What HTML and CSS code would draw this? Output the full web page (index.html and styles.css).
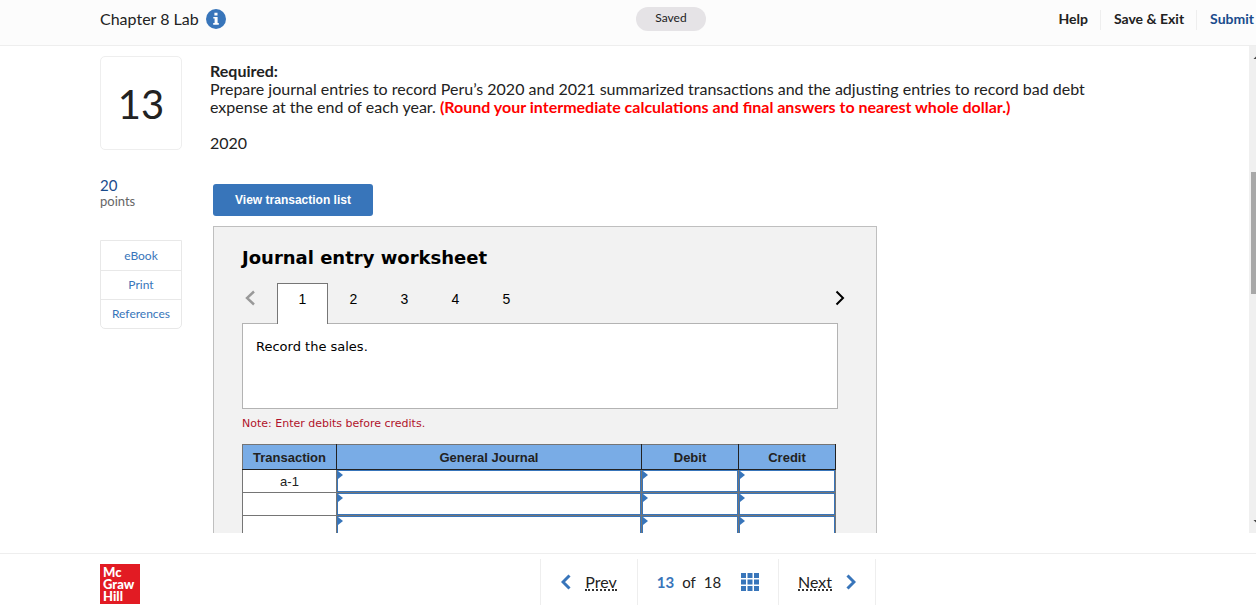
FILE: index.html
```html
<!DOCTYPE html>
<html lang="en">
<head>
<meta charset="utf-8">
<title>Chapter 8 Lab</title>
<link rel="stylesheet" href="styles.css">
</head>
<body>
<header class="topbar">
  <div class="title">
    <span>Chapter 8 Lab</span>
    <button class="icon-button" type="button" aria-label="Information">
      <svg width="20" height="20" viewBox="0 0 20 20"><circle cx="10" cy="10" r="10" fill="#3875ba"/><path fill="#fff" d="M8.4 3.8h3.1v2.6H8.4zM7.3 7.9h4.3v6.2h1.2v1.7H7.2v-1.7h1.4V9.6H7.3z"/></svg>
    </button>
  </div>
  <span class="saved">Saved</span>
  <nav class="actions">
    <a href="#">Help</a>
    <a href="#">Save &amp; Exit</a>
    <a href="#" class="submit">Submit</a>
  </nav>
</header>

<div class="viewport">
  <div class="scroll">
    <aside class="side">
      <div class="number">13</div>
      <div class="points"><span class="value">20</span><span>points</span></div>
      <nav class="resources">
        <a href="#">eBook</a>
        <a href="#">Print</a>
        <a href="#">References</a>
      </nav>
    </aside>
    <main class="content">
      <div class="question">
        <p><strong>Required:</strong></p>
        <p>Prepare journal entries to record Peru’s 2020 and 2021 summarized transactions and the adjusting entries to record bad debt<br>expense at the end of each year. <strong class="hint">(Round your intermediate calculations and final answers to nearest whole dollar.)</strong></p>
        <p class="year">2020</p>
      </div>
      <button class="view-list" type="button">View transaction list</button>
      <section class="worksheet">
        <h2>Journal entry worksheet</h2>
        <div class="tabs">
          <button class="arrow" type="button" aria-label="Previous entry">
            <svg width="16" height="16" viewBox="0 0 16 16" fill="none" stroke="#999" stroke-width="2.400"><path d="M12 1.500 5 8 12 14.500"/></svg>
          </button>
          <button class="tab active" type="button">1</button>
          <button class="tab" type="button">2</button>
          <button class="tab" type="button">3</button>
          <button class="tab" type="button">4</button>
          <button class="tab" type="button">5</button>
          <button class="arrow next" type="button" aria-label="Next entry">
            <svg width="16" height="16" viewBox="0 0 16 16" fill="none" stroke="#000" stroke-width="2"><path d="M4.500 1.500 11 8 4.500 14.500"/></svg>
          </button>
        </div>
        <div class="instruction">Record the sales.</div>
        <p class="note">Note: Enter debits before credits.</p>
        <table class="journal">
          <colgroup><col class="c-trans"><col class="c-general"><col class="c-amount"><col class="c-amount"></colgroup>
          <thead><tr><th>Transaction</th><th>General Journal</th><th>Debit</th><th>Credit</th></tr></thead>
          <tbody>
            <tr><td class="label">a-1</td><td class="entry"><input type="text" aria-label="General journal 1"></td><td class="entry"><input type="text" aria-label="Debit 1"></td><td class="entry"><input type="text" aria-label="Credit 1"></td></tr>
            <tr><td class="label"></td><td class="entry"><input type="text" aria-label="General journal 2"></td><td class="entry"><input type="text" aria-label="Debit 2"></td><td class="entry"><input type="text" aria-label="Credit 2"></td></tr>
            <tr><td class="label"></td><td class="entry"><input type="text" aria-label="General journal 3"></td><td class="entry"><input type="text" aria-label="Debit 3"></td><td class="entry"><input type="text" aria-label="Credit 3"></td></tr>
          </tbody>
        </table>
      </section>
    </main>
  </div>
  <div class="scrollbar">
    <svg class="caret" width="7" height="5" viewBox="0 0 7 5"><path d="M4.500 5 8 1.500V5z" fill="#444"/></svg>
    <div class="thumb"></div>
    <svg class="caret" width="7" height="5" viewBox="0 0 7 5"><path d="M4.500 0H8v3.500z" fill="#444"/></svg>
  </div>
</div>

<footer class="footer">
  <div class="logo"><span>Mc</span><span>Graw</span><span>Hill</span></div>
  <nav class="pager">
    <a href="#" class="step">
      <svg width="10" height="16" viewBox="0 0 10 16" fill="none" stroke="#3875ba" stroke-width="3"><path d="M8.500 1.500 2 8l6.500 6.500"/></svg>
      <span>Prev</span>
    </a>
    <div class="position">
      <strong>13</strong><span>of</span><span>18</span>
      <button class="icon-button grid" type="button" aria-label="Question list">
        <svg width="18" height="18" viewBox="0 0 18 18" fill="#3875ba"><path d="M0 0h5v5H0zM6.500 0h5v5h-5zM13 0h5v5h-5zM0 6.500h5v5H0zM6.500 6.500h5v5h-5zM13 6.500h5v5h-5zM0 13h5v5H0zM6.500 13h5v5h-5zM13 13h5v5h-5z"/></svg>
      </button>
    </div>
    <a href="#" class="step">
      <span>Next</span>
      <svg width="10" height="16" viewBox="0 0 10 16" fill="none" stroke="#3875ba" stroke-width="3"><path d="M1.500 1.500 8 8l-6.500 6.500"/></svg>
    </a>
  </nav>
</footer>
</body>
</html>
```
FILE: styles.css
```css
* { box-sizing: border-box; }
body {
  margin: 0;
  height: 100vh;
  display: flex;
  flex-direction: column;
  overflow: hidden;
  background: #fff;
  color: #222;
  font: 16px/18px Lato, "Open Sans", sans-serif;
}
p, h2 { margin: 0; }
a { color: inherit; text-decoration: none; }
button { font: inherit; color: inherit; border: 0; padding: 0; background: none; cursor: pointer; }
svg { display: block; }

.topbar {
  flex: none;
  display: grid;
  grid-template-columns: 1fr auto 1fr;
  height: 46px;
  padding: 7px 2px 0 100px;
  background: #fcfcfc;
  border-bottom: 1px solid #eee;
}
.title { display: flex; align-items: center; gap: 7px; height: 24px; }
.saved {
  height: 24px;
  min-width: 70px;
  margin-right: 12px;
  border-radius: 12px;
  background: #e5e3e6;
  font-size: 12px;
  line-height: 22px;
  text-align: center;
}
.actions { display: flex; align-items: flex-start; justify-content: flex-end; padding-top: 3px; font-size: 14px; font-weight: 700; line-height: 18px; }
.actions a { height: 20px; padding: 0 12px 0 13px; border-left: 1px solid #eee; }
.actions a:first-child { border-left: 0; }
.actions .submit { padding-right: 0; color: #1a4b8c; }

.viewport { flex: 1; min-height: 0; display: flex; margin-bottom: 20px; }
.scroll { flex: 1; min-width: 0; display: flex; gap: 28px; padding: 10px 24px 0 100px; overflow: hidden; }
.side { flex: none; width: 82px; }
.number {
  height: 94px;
  border: 1px solid #eee;
  border-radius: 5px;
  font-size: 40px;
  line-height: 94px;
  text-align: center;
}
.points { display: flex; flex-direction: column; margin-top: 27px; font-size: 13px; line-height: 16px; color: #666; }
.points .value { font-size: 15px; color: #1a4b8c; }
.resources { margin-top: 31px; border: 1px solid #e8e8e8; border-radius: 0 0 5px 5px; color: #3875ba; font-size: 12px; text-align: center; }
.resources a { display: block; line-height: 29px; }
.resources a + a { border-top: 1px solid #e8e8e8; line-height: 28px; }

.content { flex: 1; min-width: 0; }
.question { padding-top: 6px; white-space: nowrap; }
.hint { color: #f00; }
.year { margin-top: 18px; }
.view-list {
  display: block;
  height: 32px;
  margin: 32px 0 10px 3px;
  width: 160px;
  border-radius: 3px;
  background: #3875ba;
  color: #fff;
  font: bold 12px/32px "Liberation Sans", Arial, sans-serif;
}
.worksheet {
  max-width: 664px;
  min-height: 480px;
  margin-left: 3px;
  padding: 19px 38px 0 28px;
  background: #f2f2f2;
  border: 1px solid #bfbfbf;
  color: #000;
  font-family: "DejaVu Sans", Verdana, sans-serif;
}
.worksheet h2 { font-size: 18px; line-height: 24px; }
.tabs { display: flex; margin-top: 13px; font: 14px/30px "Liberation Sans", Arial, sans-serif; }
.arrow { width: 35px; height: 30px; }
.arrow.next { width: 16px; margin: 0 -10px 0 auto; }
.tab { width: 51px; height: 41px; padding-bottom: 11px; line-height: 28px; border: 1px solid transparent; border-bottom: 0; }
.tab.active { position: relative; z-index: 1; background: #fff; border-color: #767676; }
.instruction {
  min-height: 86px;
  margin-top: -1px;
  padding: 14px 13px;
  background: #fff;
  border: 1px solid #b3b3b3;
  font-size: 13px;
}
.note { margin-top: 6px; color: #b1122b; font-size: 11px; }
.journal {
  width: calc(100% - 2px);
  margin-top: 11px;
  border-collapse: collapse;
  table-layout: fixed;
  background: #fff;
  color: #222;
  font: 13px/18px "Liberation Sans", Arial, sans-serif;
}
.c-trans { width: 94px; }
.c-amount { width: 97px; }
.journal th { height: 25px; padding: 2px 0 0; background: #79ace6; border: 1px solid #222; border-top-color: #757575; }
.journal th:first-child { border-left-color: #757575; }
.journal td { height: 23px; padding: 0; border: 1px solid #757575; text-align: center; }
.journal .label { padding-top: 2px; }
.journal .entry { position: relative; }
.entry::before {
  content: "";
  position: absolute;
  left: 1px;
  top: 1px;
  border: 4px solid transparent;
  border-left: 5px solid #3875ba;
  border-right: 0;
}
.entry input { display: block; width: 100%; height: 22px; padding: 0 6px; border: 1px solid #3875ba; background: #fff; font: inherit; }

.scrollbar { flex: none; display: flex; flex-direction: column; align-items: flex-end; width: 7px; padding: 8px 0; background: #f0f0f0; }
.thumb { width: 5px; height: 26%; margin: 113px 0 auto; background: #a8a8a8; }

.footer { flex: none; display: flex; align-items: flex-start; height: 52px; padding: 5px 0 0 100px; border-top: 1px solid #eee; }
.logo {
  display: flex;
  flex-direction: column;
  width: 40px;
  height: 40px;
  margin: 5px 20px 0 0;
  padding: 2px 3px;
  background: #e21b23;
  color: #fff;
  font: 900 13px/12px Lato, sans-serif;
}
.pager { display: flex; flex: none; margin: 0 auto; height: 46px; border: solid #eee; border-width: 0 1px; }
.step { display: flex; align-items: center; justify-content: center; gap: 14px; width: 96px; }
.step span { border-bottom: 2px dotted #333; line-height: 15px; }
.position { display: flex; align-items: center; justify-content: center; gap: 8px; width: 142px; border: solid #eee; border-width: 0 1px; font-size: 15px; }
.position strong { color: #3875ba; }
.grid { margin-left: 12px; }
```
